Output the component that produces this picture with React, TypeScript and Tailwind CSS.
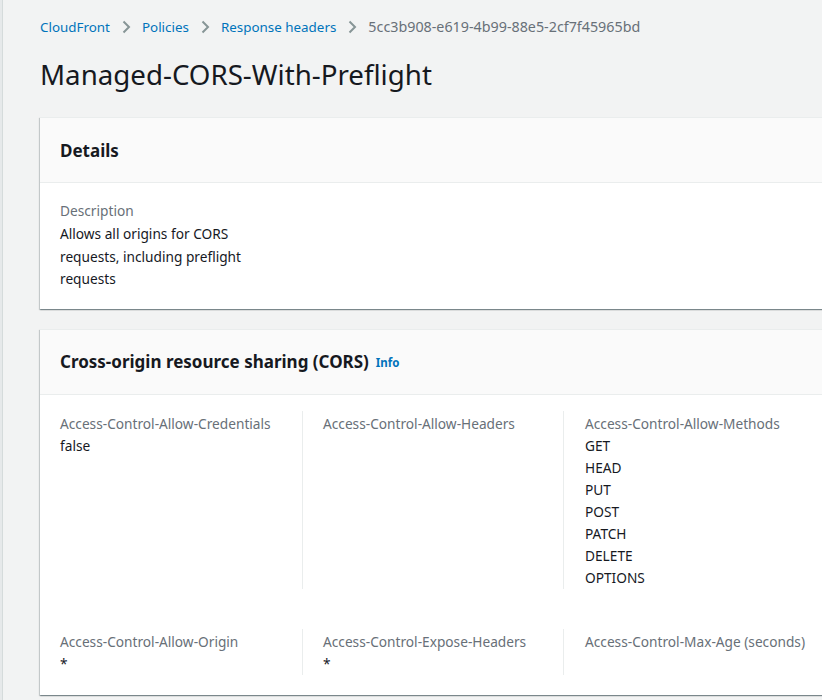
import React from "react";

const Chevron = () => (
  <svg width="16" height="16" viewBox="0 0 16 16" className="mx-2 shrink-0" aria-hidden="true">
    <path d="M5.5 2.5 L11 8 L5.5 13.5" fill="none" stroke="#879596" strokeWidth="2" />
  </svg>
);

const cardShadow =
  "shadow-[0_1px_1px_0_rgba(0,28,36,0.3),1px_1px_1px_0_rgba(0,28,36,0.15),-1px_1px_1px_0_rgba(0,28,36,0.15)]";

function Field({ label, values }: { label: string; values: string[] }) {
  return (
    <div className="pt-[2px]">
      <div className="text-[13.7px] leading-[22px] text-[#687078]">{label}</div>
      {values.map((v, i) => (
        <div key={i} className="text-[13.7px] leading-[22px] text-[#16191f]">
          {v}
        </div>
      ))}
    </div>
  );
}

export default function App() {
  return (
    <div
      className="min-h-[700px] w-full bg-[#f2f3f3] flex overflow-hidden"
      style={{ fontFamily: '"Noto Sans", "Open Sans", Arial, sans-serif' }}
    >
      <div className="w-[2px] shrink-0 bg-[#e6e9ea]" />
      <div className="w-[1px] shrink-0 bg-[#d5dbdb]" />
      <div className="flex-1 pl-[37px] min-w-0">
        {/* Breadcrumbs */}
        <nav className="flex items-center h-[22px] mt-[16px] text-[13.4px] leading-[22px] whitespace-nowrap">
          <span className="text-[#0073bb]">CloudFront</span>
          <Chevron />
          <span className="text-[#0073bb]">Policies</span>
          <Chevron />
          <span className="text-[#0073bb]">Response headers</span>
          <Chevron />
          <span className="text-[#687078] text-[14.3px]">5cc3b908-e619-4b99-88e5-2cf7f45965bd</span>
        </nav>

        <h1 className="mt-[18px] text-[27.7px] leading-[36px] font-normal text-[#16191f] whitespace-nowrap">
          Managed-CORS-With-Preflight
        </h1>

        {/* Details card */}
        <div className={`mt-[25px] w-[1000px] bg-white ${cardShadow} border-t border-[#eaeded]`}>
          <div className="h-[65px] bg-[#fafafa] border-b border-[#eaeded] px-5 flex items-center pt-[2px]">
            <h2 className="text-[17px] leading-[22px] font-bold text-[#16191f]">Details</h2>
          </div>
          <div className="px-5 pt-[15px] pb-[18px]">
            <div className="w-[190px]">
              <div className="pt-[2px]">
                <div className="text-[13.7px] leading-[22px] text-[#687078] mb-[1px]">Description</div>
                <div className="text-[13.7px] leading-[22.5px] text-[#16191f]">
                  Allows all origins for CORS requests, including preflight requests
                </div>
              </div>
            </div>
          </div>
        </div>

        {/* CORS card */}
        <div className={`mt-[20px] w-[1000px] bg-white ${cardShadow} border-t border-[#eaeded]`}>
          <div className="h-[65px] bg-[#fafafa] border-b border-[#eaeded] px-5 flex items-center">
            <h2 className="text-[17px] leading-[22px] font-bold text-[#16191f]">
              Cross-origin resource sharing (CORS)
            </h2>
            <span className="ml-[7px] mt-[3px] text-[11.5px] font-bold text-[#0073bb]">Info</span>
          </div>
          <div className="pt-[16px] pb-[20px]">
            <div className="grid grid-cols-[262px_261px_261px_216px]">
              <div className="pl-5 pr-4">
                <Field label="Access-Control-Allow-Credentials" values={["false"]} />
              </div>
              <div className="border-l border-[#eaeded] pl-5 pr-4">
                <Field label="Access-Control-Allow-Headers" values={[]} />
              </div>
              <div className="border-l border-[#eaeded] pl-[21px] pr-4">
                <Field
                  label="Access-Control-Allow-Methods"
                  values={["GET", "HEAD", "PUT", "POST", "PATCH", "DELETE", "OPTIONS"]}
                />
              </div>
              <div className="border-l border-[#eaeded]" />
            </div>
            <div className="grid grid-cols-[262px_261px_261px_216px] mt-[40px]">
              <div className="pl-5 pr-4">
                <Field label="Access-Control-Allow-Origin" values={["*"]} />
              </div>
              <div className="border-l border-[#eaeded] pl-5 pr-4">
                <Field label="Access-Control-Expose-Headers" values={["*"]} />
              </div>
              <div className="border-l border-[#eaeded] pl-[21px] pr-4 whitespace-nowrap">
                <Field label="Access-Control-Max-Age (seconds)" values={[]} />
              </div>
              <div className="border-l border-[#eaeded]" />
            </div>
          </div>
        </div>
      </div>
    </div>
  );
}
